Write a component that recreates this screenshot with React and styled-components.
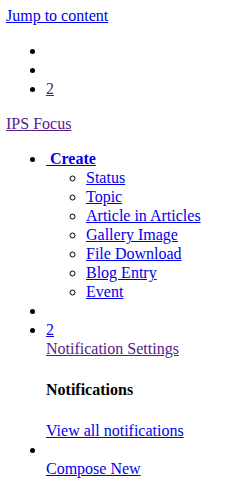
import React from "react";
import styled, { createGlobalStyle } from "styled-components";

const GlobalStyle = createGlobalStyle`
    body {
        margin: 6px;
        font-family: "Liberation Serif", "Times New Roman", serif;
        font-size: 16px;
        line-height: 19px;
        background: #fff;
        color: #000;
    }
`;

const Link = styled.a`
    color: ${(p) => (p.$visited ? "#551a8b" : "#0000ee")};
    text-decoration: underline;
    cursor: pointer;
`;

const BlockLink = styled(Link)`
    display: block;
`;

const Brand = styled.div`
    display: block;
`;

const List = styled.ul`
    margin: 16px 0;
    padding-left: 40px;
    list-style-type: disc;
`;

const SubList = styled.ul`
    margin: 0;
    padding-left: 40px;
    list-style-type: circle;
`;

const Item = styled.li`
    display: list-item;
`;

const CreateLink = styled(Link)`
    font-weight: bold;
`;

const Spacer = styled.span`
    display: inline;
`;

const Heading = styled.h4`
    margin: 22px 0;
    font-size: 16px;
    font-weight: bold;
`;

const createItems = [
    "Status",
    "Topic",
    "Article in Articles",
    "Gallery Image",
    "File Download",
    "Blog Entry",
    "Event",
];

export default function App() {
    return (
        <>
            <GlobalStyle />
            <div>
                <Link href="#content">Jump to content</Link>
            </div>
            <List>
                <Item />
                <Item />
                <Item>
                    <Link $visited href="#">2</Link>
                </Item>
            </List>
            <Brand>
                <Link $visited href="#">IPS Focus</Link>
            </Brand>
            <List>
                <Item>
                    <CreateLink href="#">{"\u00a0Create"}</CreateLink>
                    <SubList>
                        {createItems.map((name) => (
                            <Item key={name}>
                                <Link href="#">{name}</Link>
                            </Item>
                        ))}
                    </SubList>
                </Item>
                <Item />
                <Item>
                    <Link href="#">2</Link>
                    <BlockLink $visited href="#">
                        Notification Settings
                    </BlockLink>
                    <Heading>Notifications</Heading>
                    <BlockLink href="#">View all notifications</BlockLink>
                </Item>
                <Item>
                    <Spacer>{"\u00a0"}</Spacer>
                    <BlockLink href="#">Compose New</BlockLink>
                </Item>
            </List>
        </>
    );
}
